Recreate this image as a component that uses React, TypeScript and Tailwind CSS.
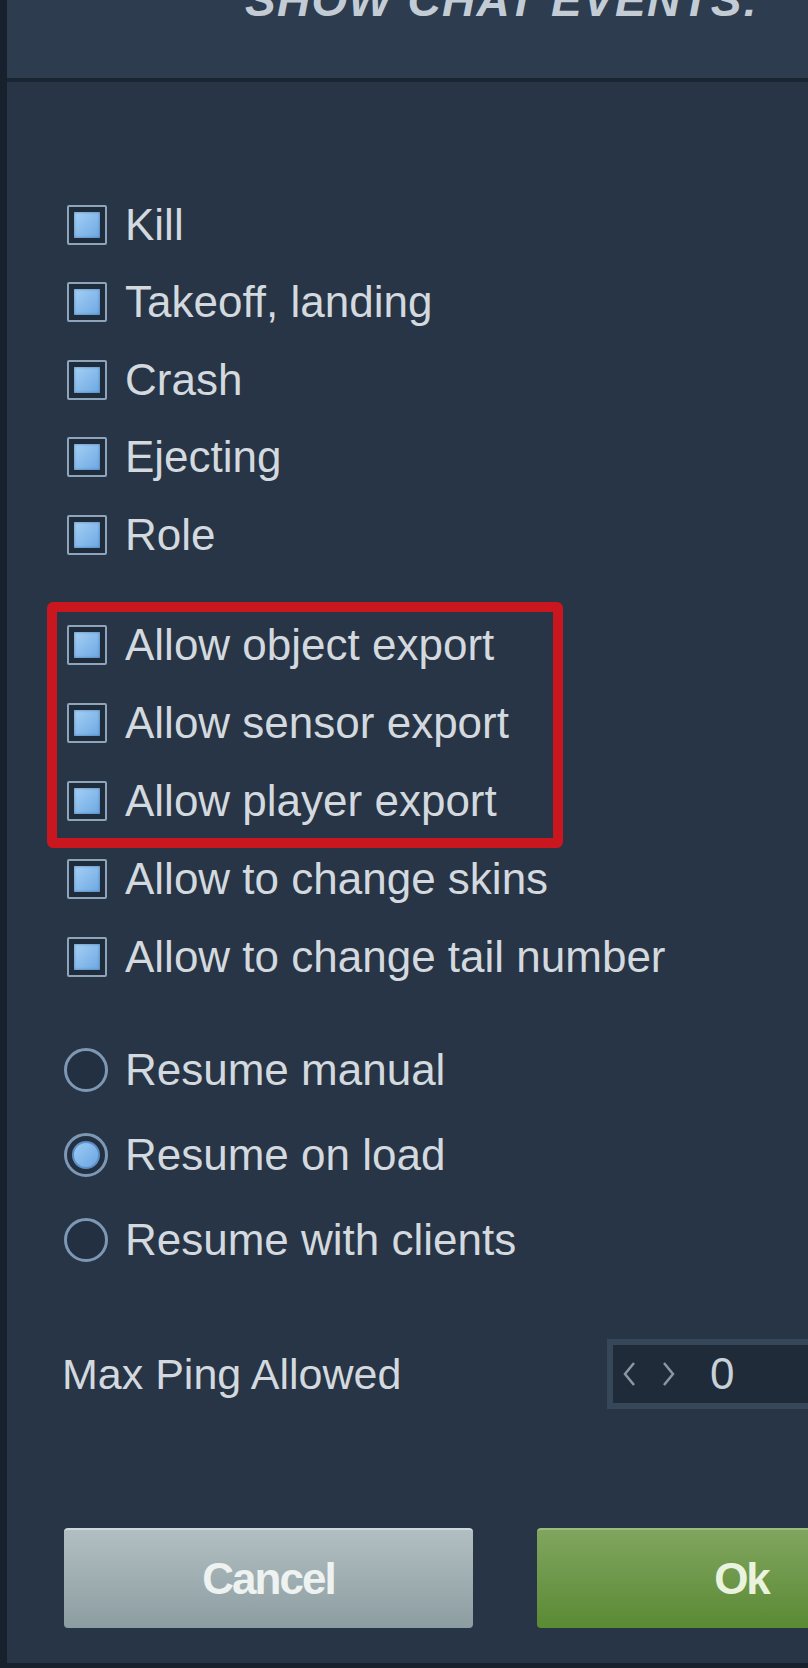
const font = "font-['Liberation_Sans',Arial,sans-serif]";

function Checkbox() {
  return (
    <div className="flex h-[40px] w-[40px] shrink-0 items-center justify-center rounded-[2px] border-2 border-[#8ea4ba] bg-[#1f2c3b]">
      <div className="h-[26px] w-[26px] bg-gradient-to-br from-[#a6d0f5] to-[#6ca8e2] shadow-[inset_0_0_3px_rgba(40,80,130,0.6)]" />
    </div>
  );
}

function Radio({ checked }: { checked?: boolean }) {
  return (
    <div className="-ml-[3px] flex h-[44px] w-[44px] shrink-0 items-center justify-center rounded-full border-[3px] border-[#7d98b5] bg-[#223041]">
      {checked && (
        <div className="h-[28px] w-[28px] rounded-full border-2 border-[#5d8fc4] bg-gradient-to-br from-[#9ccbf4] to-[#6aa6e2]" />
      )}
    </div>
  );
}

function CheckRow({ label, tall }: { label: string; tall?: boolean }) {
  return (
    <div className={`flex items-center ${tall ? "h-[78px]" : "h-[77.5px]"}`}>
      <Checkbox />
      <span className="ml-[18px] whitespace-nowrap text-[44px] leading-none text-[#d3d9de]">
        {label}
      </span>
    </div>
  );
}

function RadioRow({ label, checked }: { label: string; checked?: boolean }) {
  return (
    <div className="flex h-[85px] items-center">
      <Radio checked={checked} />
      <span className="ml-[17px] whitespace-nowrap text-[44px] leading-none text-[#d3d9de]">
        {label}
      </span>
    </div>
  );
}

export default function App() {
  return (
    <div
      className={`${font} flex h-[1668px] w-[808px] flex-col overflow-hidden border-b-[5px] border-l-[7px] border-[#17212d] bg-[#273546]`}
    >
      <header className="h-[82px] shrink-0 border-b-4 border-[#1b2532] bg-[#2d3c4e]">
        <h1 className="-mt-[23px] ml-[238px] whitespace-nowrap text-[46px] font-bold italic leading-none tracking-[1.3px] text-[#c3ccd5]">
          SHOW CHAT EVENTS:
        </h1>
      </header>

      <div className="flex flex-col pl-[60px] pt-[104px]">
        {["Kill", "Takeoff, landing", "Crash", "Ejecting", "Role"].map((l) => (
          <CheckRow key={l} label={l} />
        ))}

        <div className="relative mt-[32px]">
          {["Allow object export", "Allow sensor export", "Allow player export"].map((l) => (
            <CheckRow key={l} label={l} tall />
          ))}
          <div className="pointer-events-none absolute -left-[20px] -top-[4px] h-[246px] w-[516px] rounded-[6px] border-[10px] border-[#c9161f]" />
        </div>

        <CheckRow label="Allow to change skins" tall />
        <CheckRow label="Allow to change tail number" tall />

        <div className="mt-[31.5px] flex flex-col">
          <RadioRow label="Resume manual" />
          <RadioRow label="Resume on load" checked />
          <RadioRow label="Resume with clients" />
        </div>

        <div className="-ml-[5px] mt-[57px] flex h-[70px] items-center">
          <span className="w-[545px] shrink-0 whitespace-nowrap text-[43px] leading-none text-[#d3d9de]">
            Max Ping Allowed
          </span>
          <div className="flex h-[70px] w-[300px] shrink-0 items-center border-[6px] border-[#36475a] bg-[#1f2b38] pl-[9px]">
            <svg width="14" height="26" viewBox="0 0 14 26" className="shrink-0">
              <polyline points="12,2 3,13 12,24" fill="none" stroke="#8898a8" strokeWidth="2.5" />
            </svg>
            <svg width="14" height="26" viewBox="0 0 14 26" className="ml-[26px] shrink-0">
              <polyline points="2,2 11,13 2,24" fill="none" stroke="#8898a8" strokeWidth="2.5" />
            </svg>
            <span className="ml-[34px] text-[44px] leading-none text-[#c8d0d8]">0</span>
          </div>
        </div>

        <div className="-ml-[3px] mt-[119px] flex gap-[64px]">
          <button className="flex h-[100px] w-[409px] shrink-0 items-center justify-center rounded-[4px] border-t-2 border-[#cfd9db] bg-gradient-to-b from-[#b2bfc2] to-[#8c9da1] text-[44px] font-bold tracking-[-2px] text-[#eef3f1]">
            Cancel
          </button>
          <button className="flex h-[100px] w-[409px] shrink-0 items-center justify-center rounded-[4px] border-t-2 border-[#9cbc7c] bg-gradient-to-b from-[#80a55e] to-[#5a8a34] text-[44px] font-bold tracking-[-2px] text-[#eaf3de]">
            Ok
          </button>
        </div>
      </div>
    </div>
  );
}
